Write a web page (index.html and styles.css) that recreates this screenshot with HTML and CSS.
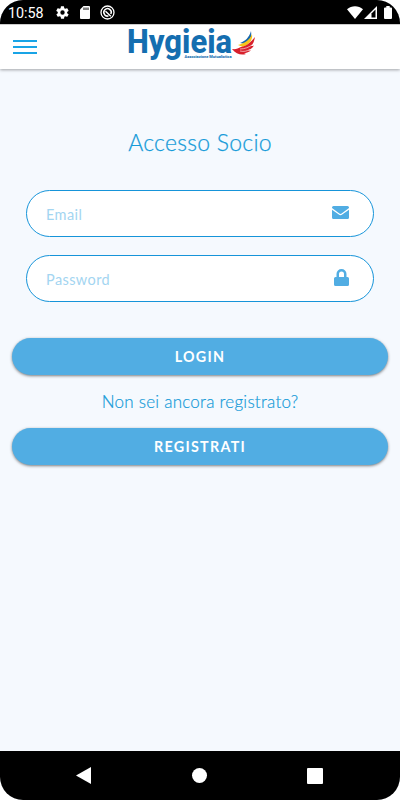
FILE: index.html
```html
<!DOCTYPE html>
<html lang="it">
<head>
  <meta charset="UTF-8">
  <meta name="viewport" content="width=device-width, initial-scale=1.0">
  <title>Hygieia - Accesso Socio</title>
  <link rel="stylesheet" href="styles.css">
</head>
<body>
  <div class="phone">
    <div class="status-bar">
      <span class="clock">10:58</span>
      <svg class="status-icon" width="15" height="15" viewBox="0 0 24 24"><path d="M19.4 13a7.500 7.500 0 0 0 0-2l2.100-1.600a.5.5 0 0 0 .1-.6l-2-3.500a.5.5 0 0 0-.6-.2l-2.500 1a7.300 7.300 0 0 0-1.700-1l-.4-2.700a.5.5 0 0 0-.5-.4h-4a.5.5 0 0 0-.5.400L9 5.100a7.300 7.300 0 0 0-1.700 1l-2.500-1a.5.5 0 0 0-.6.200l-2 3.500a.5.5 0 0 0 .1.600L4.500 11a7.500 7.500 0 0 0 0 2l-2.100 1.600a.5.5 0 0 0-.1.600l2 3.500c.1.200.4.300.6.200l2.500-1a7.300 7.300 0 0 0 1.700 1l.4 2.700c0 .2.200.4.500.4h4c.300 0 .5-.2.500-.4l.4-2.700a7.300 7.300 0 0 0 1.700-1l2.500 1c.2.100.5 0 .6-.2l2-3.500a.5.500 0 0 0-.1-.6zM12 15.500a3.500 3.500 0 1 1 0-7 3.500 3.500 0 0 1 0 7z" fill="#fff" fill-rule="evenodd"/></svg>
      <svg class="status-icon" width="10" height="13" viewBox="0 0 10 13"><path d="M3.500 0H9a1 1 0 0 1 1 1v11a1 1 0 0 1-1 1H1a1 1 0 0 1-1-1V3.500z" fill="#fff"/><path d="M4 1.500v2.500M6 1.500v2.500M8 1.500v2.500" stroke="#000" stroke-width="1"/></svg>
      <svg class="status-icon" width="15" height="15" viewBox="0 0 15 15" fill="none" stroke="#fff"><circle cx="7.500" cy="7.500" r="6.500" stroke-width="1.300"/><path d="M4.600 9.500A3.700 3.700 0 1 1 10.800 9M5.500 6.200l5.300 5M4.500 9.500c1 1.500 2.500 1.900 4 1.400" stroke-width="1.500"/></svg>
      <div class="status-right">
        <svg width="16" height="13" viewBox="0 0 16 13"><path d="M0 3.300C4.500-.7 11.500-.7 16 3.300L8 13z" fill="#fff"/></svg>
        <svg width="13" height="13" viewBox="0 0 13 13"><path d="M0 13L13 0V13z" fill="#fff"/><path d="M7.500 7.500L11.500 3.500V11.500H7.500z" fill="#000"/></svg>
        <svg class="battery" width="8" height="13" viewBox="0 0 8 13"><path d="M2.300 0h3.400v1.500H7a1 1 0 0 1 1 1V12a1 1 0 0 1-1 1H1a1 1 0 0 1-1-1V2.500a1 1 0 0 1 1-1h1.300z" fill="#fff"/></svg>
      </div>
    </div>

    <header class="header">
      <div class="menu">
        <span></span>
        <span></span>
        <span></span>
      </div>
      <svg class="logo" width="130" height="42" viewBox="0 0 130 42">
        <text class="logo-name" x="-1" y="28" textLength="105" lengthAdjust="spacingAndGlyphs">Hygieia</text>
        <text class="logo-sub" x="56.500" y="33.300" textLength="47" lengthAdjust="spacingAndGlyphs">Associazione Mutualistica</text>
        <path d="M112 18c5-2 9-5 11-12 1 6-1 10-5 13z" fill="#1768ad"/>
        <path d="M110 20c7-2 12-5 14-11 1 6-3 11-9 13z" fill="#f6c51c"/>
        <path d="M104 24c4 .5 6-.5 9-2 6-1 10-5 14-10-1 5-2 7-4 9 1 0 2 0 3-.5-2 3-4 4-6 5h3c-3 2-5 2.500-7 2.500l2 1c-5 1.500-10 0-14-5z" fill="#d8202c"/>
        <path d="M112 24c5 0 9-2 12-4M112 26c4 1 7 0 10-1.500" fill="none" stroke="#fff" stroke-width=".6"/>
      </svg>
    </header>

    <main class="content">
      <h1>Accesso Socio</h1>
      <div class="field">
        <input type="email" placeholder="Email">
        <svg width="17" height="13" viewBox="0 0 17 13"><path d="M1.500 0h14A1.500 1.500 0 0 1 17 1.500v.6L9.600 7.500c-.7.500-1.500.5-2.200 0L0 2.100v-.6A1.500 1.500 0 0 1 1.500 0zM0 3.700l6.800 4.900c1 .8 2.400.8 3.400 0L17 3.700v7.800a1.500 1.500 0 0 1-1.500 1.500h-14A1.500 1.500 0 0 1 0 11.500z" fill="#51ade3"/></svg>
      </div>
      <div class="field">
        <input type="password" placeholder="Password">
        <svg class="lock" width="15" height="17" viewBox="0 0 15 17"><path d="M2.500 8V5a5 5 0 0 1 10 0v3h1A1.500 1.500 0 0 1 15 9.500v6a1.500 1.500 0 0 1-1.500 1.500h-12A1.500 1.500 0 0 1 0 15.500v-6A1.500 1.500 0 0 1 1.500 8zM5 8h5V5a2.500 2.500 0 0 0-5 0z" fill="#51ade3" fill-rule="evenodd"/></svg>
      </div>
      <button class="btn btn-login">LOGIN</button>
      <p>Non sei ancora registrato?</p>
      <button class="btn">REGISTRATI</button>
    </main>

    <nav class="nav-bar">
      <svg width="15" height="17" viewBox="0 0 15 17"><path d="M15 0v17L0 8.500z" fill="#fff"/></svg>
      <span class="home"></span>
      <span class="recent"></span>
    </nav>
  </div>
</body>
</html>
```

FILE: styles.css
```css
* {
  box-sizing: border-box;
}
body {
  margin: 0;
  background: #fff;
  font-family: Lato, "Open Sans", sans-serif;
}
svg {
  display: block;
  flex: none;
}
.phone {
  width: 400px;
  height: 800px;
  display: flex;
  flex-direction: column;
  background: #f5f9fe;
  border-radius: 23px;
  overflow: hidden;
}
.status-bar {
  height: 24px;
  flex: none;
  display: flex;
  align-items: center;
  padding: 1px 8px 0;
  background: #000;
  color: #fff;
}
.clock {
  width: 47px;
  font-family: Roboto, sans-serif;
  font-size: 14.3px;
}
.status-icon {
  margin-right: 10px;
}
.status-right {
  display: flex;
  gap: 1px;
  margin-left: auto;
}
.battery {
  margin-left: 6px;
}
.header {
  height: 45px;
  flex: none;
  display: flex;
  align-items: flex-start;
  background: #fff;
  border-top: 1px solid #ccc;
  box-shadow: 0 1px 3px rgba(0, 0, 0, 0.35);
}
.menu {
  display: flex;
  flex-direction: column;
  gap: 4px;
  width: 24px;
  margin: 15px 91px 0 13px;
}
.menu span {
  height: 2px;
  background: #19a4e6;
}
.logo {
  overflow: visible;
}
.logo-name {
  font-family: Roboto, sans-serif;
  font-size: 33px;
  font-weight: 800;
  fill: #146eb0;
}
.logo-sub {
  font-family: Roboto, sans-serif;
  font-size: 4px;
  font-weight: 800;
  fill: #146eb0;
}
.content {
  flex: 1;
  display: flex;
  flex-direction: column;
  padding: 0 12px;
}
h1 {
  margin: 58px 0 33px;
  font-size: 23px;
  font-weight: 300;
  line-height: 30px;
  letter-spacing: 0.25px;
  text-align: center;
  color: #169bd9;
  -webkit-text-stroke: 0.25px #169bd9;
}
.field {
  height: 47px;
  display: flex;
  align-items: center;
  margin: 0 14px 18px;
  padding: 0 24px 3px 19px;
  background: #fff;
  border: 1px solid #1694d9;
  border-radius: 24px;
}
.field input {
  flex: 1;
  min-width: 0;
  padding: 4px 0 0;
  border: 0;
  outline: none;
  background: none;
  font-family: inherit;
  font-size: 14.5px;
  letter-spacing: 0.4px;
}
.field input::placeholder {
  color: #a3d5f1;
}
.btn {
  height: 37px;
  flex: none;
  border: 0;
  border-radius: 19px;
  background: #51ade3;
  box-shadow: 0 1px 3px rgba(0, 0, 0, 0.5);
  color: #fff;
  font-family: inherit;
  font-size: 14.3px;
  font-weight: 700;
  letter-spacing: 1.3px;
}
.btn-login {
  margin-top: 18px;
}
p {
  margin: 15px 0;
  font-size: 17px;
  font-weight: 300;
  line-height: 23px;
  letter-spacing: 0.25px;
  text-align: center;
  color: #169bd9;
  -webkit-text-stroke: 0.2px #169bd9;
}
.nav-bar {
  height: 49px;
  flex: none;
  display: flex;
  align-items: center;
  padding-left: 76px;
  background: #000;
}
.home {
  width: 15px;
  height: 15px;
  margin: 0 100px 0 101px;
  border-radius: 50%;
  background: #fff;
}
.recent {
  width: 16px;
  height: 16px;
  border-radius: 1px;
  background: #fff;
}
```
